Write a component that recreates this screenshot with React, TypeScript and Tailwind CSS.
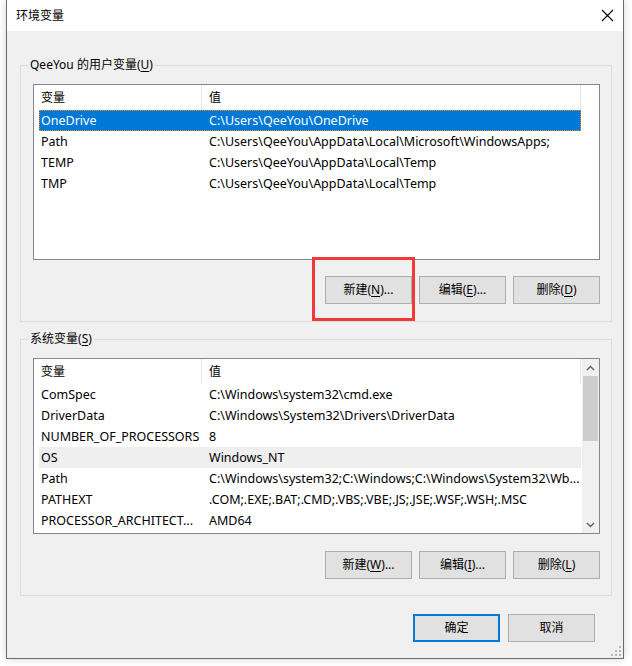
import React from "react";

const FONT = { fontFamily: '"Noto Sans", "Noto Sans CJK SC", sans-serif' };

type Row = { name: string; value: string; selected?: boolean; hover?: boolean };

const USER_VARS: Row[] = [
  { name: "OneDrive", value: "C:\\Users\\QeeYou\\OneDrive", selected: true },
  { name: "Path", value: "C:\\Users\\QeeYou\\AppData\\Local\\Microsoft\\WindowsApps;" },
  { name: "TEMP", value: "C:\\Users\\QeeYou\\AppData\\Local\\Temp" },
  { name: "TMP", value: "C:\\Users\\QeeYou\\AppData\\Local\\Temp" },
];

const SYS_VARS: Row[] = [
  { name: "ComSpec", value: "C:\\Windows\\system32\\cmd.exe" },
  { name: "DriverData", value: "C:\\Windows\\System32\\Drivers\\DriverData" },
  { name: "NUMBER_OF_PROCESSORS", value: "8" },
  { name: "OS", value: "Windows_NT", hover: true },
  { name: "Path", value: "C:\\Windows\\system32;C:\\Windows;C:\\Windows\\System32\\Wb..." },
  { name: "PATHEXT", value: ".COM;.EXE;.BAT;.CMD;.VBS;.VBE;.JS;.JSE;.WSF;.WSH;.MSC" },
  { name: "PROCESSOR_ARCHITECT...", value: "AMD64" },
];

function Btn({ label, mnemonic, tail = "", primary = false }: { label: string; mnemonic?: string; tail?: string; primary?: boolean }) {
  return (
    <div
      className={
        "w-[87px] h-[28px] flex items-center justify-center bg-[#e1e1e1] text-[12px] text-black " +
        (primary ? "border-2 border-[#0078d7]" : "border border-[#adadad]")
      }
    >
      {label}
      {mnemonic && (
        <>
          (<span className="underline underline-offset-2">{mnemonic}</span>){tail}
        </>
      )}
    </div>
  );
}

function Chevron({ up }: { up: boolean }) {
  return (
    <svg width="9" height="6" viewBox="0 0 9 6">
      <path d={up ? "M1 5 L4.5 1.5 L8 5" : "M1 1 L4.5 4.5 L8 1"} fill="none" stroke="#606060" strokeWidth="1.4" />
    </svg>
  );
}

function ListView({ rows, scroll }: { rows: Row[]; scroll?: boolean }) {
  return (
    <div className="h-[176px] border border-[#828790] bg-white flex text-[12.5px]">
      <div className="w-[547px] flex flex-col pl-[5px] overflow-hidden">
        <div className="h-[25px] flex items-center shrink-0 text-[12px]">
          <div className="w-[163px] h-full flex items-center pl-[2px] border-r border-[#e5e5e5]">变量</div>
          <div className="flex-1 h-full flex items-center pl-[7px] border-r border-[#e5e5e5]">值</div>
        </div>
        {rows.map((r, i) => (
          <div
            key={i}
            className={
              "h-[21px] flex items-center pt-[1px] shrink-0 whitespace-nowrap " +
              (r.selected
                ? "bg-[#0078d7] text-white outline outline-1 outline-dotted outline-[#f08a24] -outline-offset-1"
                : r.hover
                ? "bg-[#efefef]"
                : "")
            }
          >
            <div className="w-[170px] pl-[2px] overflow-hidden">{r.name}</div>
            <div className="flex-1 overflow-hidden">{r.value}</div>
          </div>
        ))}
      </div>
      <div className="flex-1" />
      {scroll && (
        <div className="w-[17px] bg-[#f0f0f0] flex flex-col items-center">
          <div className="h-[17px] w-full flex items-center justify-center">
            <Chevron up />
          </div>
          <div className="w-[15px] h-[65px] bg-[#cdcdcd]" />
          <div className="flex-1" />
          <div className="h-[17px] w-full flex items-center justify-center">
            <Chevron up={false} />
          </div>
        </div>
      )}
    </div>
  );
}

function Group({ title, mnemonic, children }: { title: string; mnemonic: string; children: React.ReactNode }) {
  return (
    <div className="relative border border-[#dcdcdc] h-[257px] px-[12px] pt-[18px] pr-[11px] flex flex-col">
      <div className="absolute -top-[9px] left-[7px] px-[2px] bg-[#f0f0f0] leading-[16px] text-[12px]">
        {title}(<span className="underline underline-offset-2">{mnemonic}</span>)
      </div>
      {children}
    </div>
  );
}

export default function App() {
  return (
    <div className="w-[632px] h-[666px] bg-white relative overflow-hidden text-[12px] text-black" style={FONT}>
      <div className="absolute left-[6px] top-0 w-[618px] h-[659px] border border-t-0 border-[#6b6b6b] bg-[#f0f0f0] flex flex-col shadow-[0_0_8px_rgba(0,0,0,0.18)]">
        {/* title bar */}
        <div className="h-[31px] bg-white flex items-center justify-between pl-[9px] pr-[9px] shrink-0">
          <span className="text-[12px]">环境变量</span>
          <svg width="13" height="13" viewBox="0 0 13 13">
            <path d="M1 1 L12 12 M12 1 L1 12" stroke="#000" strokeWidth="1.1" />
          </svg>
        </div>

        <div className="flex-1 flex flex-col pl-[13px] pr-[11px] pt-[34px]">
          <Group title="QeeYou 的用户变量" mnemonic="U">
            <ListView rows={USER_VARS} />
            <div className="flex justify-end gap-[7px] mt-[16px]">
              <Btn label="新建" mnemonic="N" tail="..." />
              <Btn label="编辑" mnemonic="E" tail="..." />
              <Btn label="删除" mnemonic="D" />
            </div>
          </Group>

          <div className="h-[17px]" />

          <Group title="系统变量" mnemonic="S">
            <ListView rows={SYS_VARS} scroll />
            <div className="flex justify-end gap-[7px] mt-[17px]">
              <Btn label="新建" mnemonic="W" tail="..." />
              <Btn label="编辑" mnemonic="I" tail="..." />
              <Btn label="删除" mnemonic="L" />
            </div>
          </Group>

          <div className="flex justify-end gap-[8px] mt-[18px] pr-[17px]">
            <Btn label="确定" primary />
            <Btn label="取消" />
          </div>
        </div>

        {/* resize grip */}
        <svg className="absolute right-[2px] bottom-[2px]" width="11" height="11" viewBox="0 0 11 11">
          {[
            [8, 0], [8, 4], [4, 4], [8, 8], [4, 8], [0, 8],
          ].map(([x, y], i) => (
            <rect key={i} x={x + 1} y={y + 1} width="2" height="2" fill="#b4b4b4" />
          ))}
        </svg>
      </div>

      {/* annotation */}
      <div className="absolute left-[312px] top-[257px] w-[103px] h-[64px] border-[3px] border-[#f03a3a]" />
    </div>
  );
}
